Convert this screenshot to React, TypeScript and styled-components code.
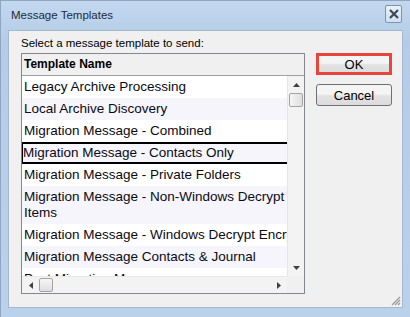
import React from "react";
import styled, { createGlobalStyle } from "styled-components";

interface Template {
  id: number;
  lines: string[];
}

const templates: Template[] = [
  { id: 1, lines: ["Legacy Archive Processing"] },
  { id: 2, lines: ["Local Archive Discovery"] },
  { id: 3, lines: ["Migration Message - Combined"] },
  { id: 4, lines: ["Migration Message - Contacts Only"] },
  { id: 5, lines: ["Migration Message - Private Folders"] },
  { id: 6, lines: ["Migration Message - Non-Windows Decrypt", "Items"] },
  { id: 7, lines: ["Migration Message - Windows Decrypt Encryption"] },
  { id: 8, lines: ["Migration Message Contacts & Journal"] },
  { id: 9, lines: ["Post Migration Message"] },
];

const GlobalStyle = createGlobalStyle`
  html, body {
    margin: 0;
    padding: 0;
    background: #b9d1ea;
  }
  body {
    font-family: "Liberation Sans", Arial, sans-serif;
  }
`;

const Window = styled.div`
  width: 410px;
  height: 317px;
  box-sizing: border-box;
  display: flex;
  flex-direction: column;
  background: linear-gradient(#c3d8ef, #b4cce7 40px, #b9d1ea);
  border: 1px solid #8ea6c4;
  border-bottom: none;
  border-right: none;
`;

const TitleBar = styled.div`
  height: 29px;
  display: flex;
  align-items: center;
  padding: 0 8px 0 10px;
  box-sizing: border-box;
`;

const Title = styled.div`
  font-size: 11.5px;
  color: #1e2a3a;
  margin-top: -2px;
`;

const CloseButton = styled.div`
  margin-left: auto;
  margin-top: -4px;
  width: 17px;
  height: 18px;
  box-sizing: border-box;
  border: 1px solid #7d92ad;
  border-radius: 2px;
  background: linear-gradient(#e9f0f8, #d3e0ef);
  display: flex;
  align-items: center;
  justify-content: center;
`;

const Client = styled.div`
  flex: 1;
  margin: 0 7px 9px 7px;
  background: #f0f0f0;
  border: 1px solid #a5b8cf;
  position: relative;
  display: flex;
  padding: 5px 0 0 12px;
  gap: 11px;
`;

const LeftColumn = styled.div`
  display: flex;
  flex-direction: column;
`;

const Label = styled.div`
  font-size: 11.5px;
  line-height: 15px;
  color: #000;
  margin-bottom: 2px;
`;

const ListBox = styled.div`
  width: 284px;
  height: 241px;
  box-sizing: border-box;
  border: 1px solid #828790;
  background: #fff;
  display: grid;
  grid-template-columns: 1fr 17px;
  grid-template-rows: 22px 1fr 17px;
`;

const Header = styled.div`
  grid-column: 1 / 3;
  background: #f0f0f0;
  border-bottom: 1px solid #a0a0a0;
  font-weight: bold;
  font-size: 12px;
  line-height: 21px;
  padding-left: 2px;
  color: #000;
`;

const Rows = styled.div`
  overflow: hidden;
`;

const Row = styled.div<{ $alt: boolean; $focused: boolean }>`
  box-sizing: border-box;
  padding: ${({ $focused }) => ($focused ? "1px 0 1px 0" : "3px 0 3px 2px")};
  border: ${({ $focused }) => ($focused ? "2px solid #000" : "none")};
  border-right: none;
  margin-left: ${({ $focused }) => ($focused ? "-1px" : "0")};
  background: ${({ $alt }) => ($alt ? "#f5f5fb" : "#fff")};
  font-size: 13.5px;
  line-height: 16px;
  color: #0a0a14;
  white-space: nowrap;
  overflow: hidden;
`;

const VScroll = styled.div`
  background: #f3f3f3;
  border-left: 1px solid #e6e6e6;
  display: flex;
  flex-direction: column;
  align-items: center;
`;

const HScroll = styled.div`
  background: #f3f3f3;
  border-top: 1px solid #e6e6e6;
  display: flex;
  align-items: center;
`;

const Corner = styled.div`
  background: #f0f0f0;
`;

const ArrowCell = styled.div`
  width: 17px;
  height: 17px;
  display: flex;
  align-items: center;
  justify-content: center;
`;

const Thumb = styled.div<{ $horizontal?: boolean }>`
  width: 14px;
  height: 14px;
  box-sizing: border-box;
  border: 1px solid #a3a3a3;
  border-radius: 2px;
  background: ${({ $horizontal }) =>
    $horizontal
      ? "linear-gradient(#f6f6f6, #dedede)"
      : "linear-gradient(90deg, #f6f6f6, #dedede)"};
`;

const Spacer = styled.div`
  flex: 1;
`;

const ButtonColumn = styled.div`
  display: flex;
  flex-direction: column;
  gap: 9px;
  padding-top: 17px;
`;

const Button = styled.div<{ $highlight?: boolean }>`
  width: 76px;
  height: 22px;
  box-sizing: border-box;
  border: ${({ $highlight }) =>
    $highlight ? "3px solid #e8453f" : "1px solid #707070"};
  border-radius: ${({ $highlight }) => ($highlight ? "0" : "3px")};
  background: linear-gradient(#f4f4f4 45%, #e2e2e2 55%, #dcdcdc);
  font-size: 13px;
  color: #000;
  display: flex;
  align-items: center;
  justify-content: center;
`;

const Grip = styled.svg`
  position: absolute;
  right: 1px;
  bottom: 1px;
`;

const Arrow: React.FC<{ dir: "up" | "down" | "left" | "right" }> = ({ dir }) => {
  const points = {
    up: "0,4 7,4 3.5,0",
    down: "0,0 7,0 3.5,4",
    left: "4,0 4,7 0,3.5",
    right: "0,0 0,7 4,3.5",
  }[dir];
  const vertical = dir === "up" || dir === "down";
  return (
    <svg width={vertical ? 7 : 4} height={vertical ? 4 : 7}>
      <polygon points={points} fill="#404040" />
    </svg>
  );
};

const App: React.FC = () => {
  return (
    <>
      <GlobalStyle />
      <Window>
        <TitleBar>
          <Title>Message Templates</Title>
          <CloseButton>
            <svg width="10" height="10" viewBox="0 0 10 10">
              <path d="M1 1 L9 9 M9 1 L1 9" stroke="#3a4758" strokeWidth="2.2" />
            </svg>
          </CloseButton>
        </TitleBar>
        <Client>
          <LeftColumn>
            <Label>Select a message template to send:</Label>
            <ListBox>
              <Header>Template Name</Header>
              <Rows>
                {templates.map((t, i) => (
                  <Row key={t.id} $alt={i % 2 === 1} $focused={t.id === 4}>
                    {t.lines.map((line) => (
                      <div key={line}>{line}</div>
                    ))}
                  </Row>
                ))}
              </Rows>
              <VScroll>
                <ArrowCell>
                  <Arrow dir="up" />
                </ArrowCell>
                <Thumb />
                <Spacer />
                <ArrowCell>
                  <Arrow dir="down" />
                </ArrowCell>
              </VScroll>
              <HScroll>
                <ArrowCell>
                  <Arrow dir="left" />
                </ArrowCell>
                <Thumb $horizontal />
                <Spacer />
                <ArrowCell>
                  <Arrow dir="right" />
                </ArrowCell>
              </HScroll>
              <Corner />
            </ListBox>
          </LeftColumn>
          <ButtonColumn>
            <Button $highlight>OK</Button>
            <Button>Cancel</Button>
          </ButtonColumn>
          <Grip width="12" height="12" viewBox="0 0 12 12">
            <path
              d="M11 3 L3 11 M11 6 L6 11 M11 9 L9 11"
              stroke="#9a9a9a"
              strokeWidth="1.2"
            />
          </Grip>
        </Client>
      </Window>
    </>
  );
};

export default App;
